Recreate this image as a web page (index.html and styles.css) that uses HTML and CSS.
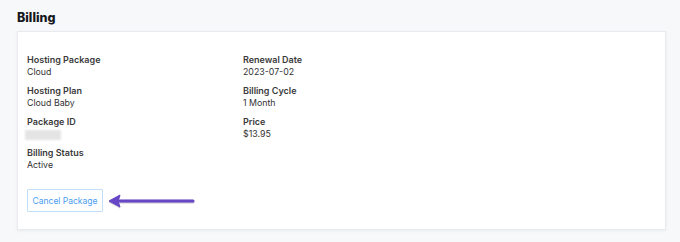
FILE: index.html
```html
<!DOCTYPE html>
<html>
<head>
<meta charset="utf-8">
<link rel="stylesheet" href="styles.css">
</head>
<body>
<div class="page">
  <h1 class="title">Billing</h1>
  <section class="card">
    <div class="grid">
      <div class="col">
        <div class="item"><div class="label">Hosting Package</div><div class="value">Cloud</div></div>
        <div class="item"><div class="label">Hosting Plan</div><div class="value">Cloud Baby</div></div>
        <div class="item"><div class="label">Package ID</div><div class="value"><span class="blur"></span></div></div>
        <div class="item"><div class="label">Billing Status</div><div class="value">Active</div></div>
      </div>
      <div class="col">
        <div class="item"><div class="label">Renewal Date</div><div class="value">2023-07-02</div></div>
        <div class="item"><div class="label">Billing Cycle</div><div class="value">1 Month</div></div>
        <div class="item"><div class="label">Price</div><div class="value">$13.95</div></div>
      </div>
    </div>
    <div class="actions">
      <button class="btn">Cancel Package</button>
      <svg class="arrow" width="90" height="16" viewBox="0 0 90 16">
        <defs>
          <filter id="sh" x="-10%" y="-50%" width="120%" height="200%">
            <feDropShadow dx="0" dy="0.6" stdDeviation="0.6" flood-color="#000" flood-opacity="0.35"/>
          </filter>
        </defs>
        <g filter="url(#sh)" fill="#6747c7" stroke="#6747c7">
          <line x1="10" y1="8" x2="86" y2="8" stroke-width="3" stroke-linecap="round"/>
          <path d="M2 8 L13 2 L11 8 L13 14 Z" stroke-width="1" stroke-linejoin="round"/>
        </g>
      </svg>
    </div>
  </section>
</div>
</body>
</html>
```

FILE: styles.css
```css
* { box-sizing: border-box; }
html, body { margin: 0; padding: 0; }
body {
  background: #f7f8fa;
  font-family: Inter, "Liberation Sans", sans-serif;
  color: #333;
  width: 680px;
  height: 242px;
  overflow: hidden;
}
.page {
  padding: 10px 14px 0 17px;
}
.title {
  margin: 0 0 5px 0;
  font-size: 12.5px;
  line-height: 16px;
  font-weight: 800;
  color: #16181d;
}
.card {
  background: #fff;
  border: 1px solid #e9ebee;
  box-shadow: 0 1px 3px rgba(0,0,0,0.06);
  width: 649px;
  height: 199px;
  padding: 22px 9px 0 9px;
}
.grid {
  display: grid;
  grid-template-columns: 216px 216px;
}
.col {
  display: flex;
  flex-direction: column;
  gap: 7px;
}
.item {
  display: flex;
  flex-direction: column;
}
.label {
  font-size: 9px;
  line-height: 12px;
  font-weight: 600;
  color: #3a3a3a;
}
.value {
  font-size: 8.8px;
  line-height: 12px;
  color: #333;
}
.blur {
  display: inline-block;
  width: 36px;
  height: 10px;
  margin-left: -2px;
  margin-top: 2px;
  background: #e4e4e4;
  filter: blur(1px);
  vertical-align: top;
}
.actions {
  display: flex;
  align-items: center;
  margin-top: 18px;
}
.btn {
  width: 76px;
  height: 23px;
  padding: 0;
  background: #fff;
  border: 1px solid #c3def9;
  border-radius: 1px;
  color: #4a9cf0;
  font-family: Inter, "Liberation Sans", sans-serif;
  font-size: 8.5px;
}
.arrow {
  margin-left: 4px;
  margin-top: 1px;
  display: block;
}
```
